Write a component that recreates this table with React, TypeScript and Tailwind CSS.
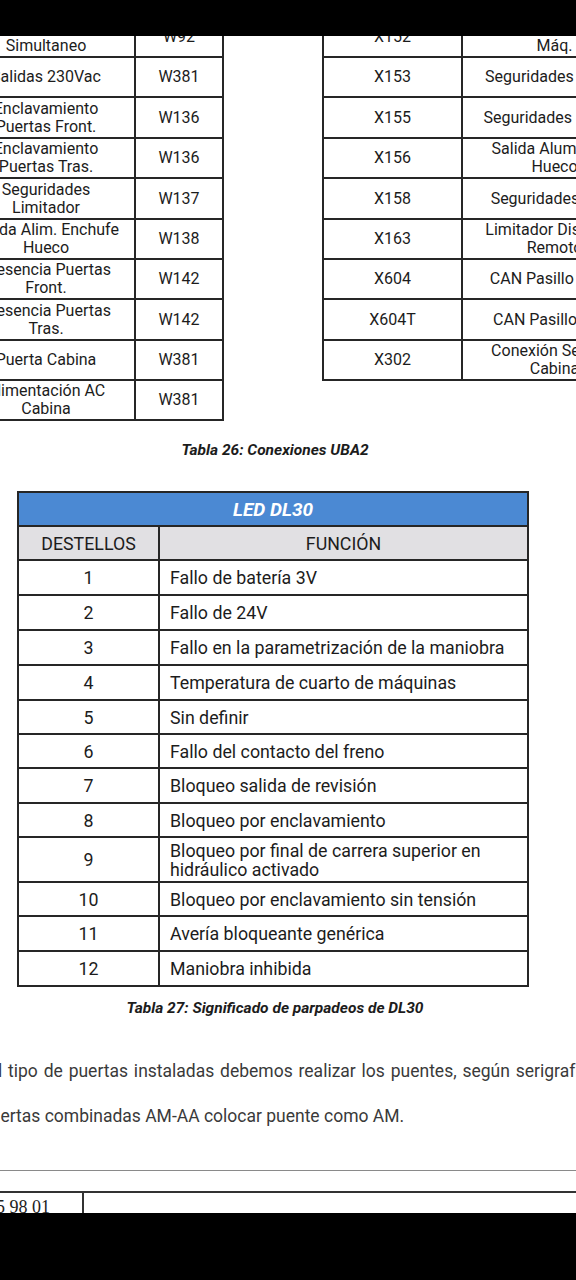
import React from 'react';

const font = "font-['Roboto','Liberation_Sans',sans-serif]";

const leftRows: { name: string[]; code: string; h: number }[] = [
  { name: ['Rescate', 'Simultaneo'], code: 'W92', h: 40 },
  { name: ['Salidas 230Vac'], code: 'W381', h: 40 },
  { name: ['Enclavamiento', 'Puertas Front.'], code: 'W136', h: 41 },
  { name: ['Enclavamiento', 'Puertas Tras.'], code: 'W136', h: 40 },
  { name: ['Seguridades', 'Limitador'], code: 'W137', h: 41 },
  { name: ['Salida Alim. Enchufe', 'Hueco'], code: 'W138', h: 40 },
  { name: ['Presencia Puertas', 'Front.'], code: 'W142', h: 40 },
  { name: ['Presencia Puertas', 'Tras.'], code: 'W142', h: 41 },
  { name: ['Puerta Cabina'], code: 'W381', h: 40 },
  { name: ['Alimentación AC', 'Cabina'], code: 'W381', h: 40 },
];

const rightRows: { code: string; name: string[]; h: number }[] = [
  { code: 'X152', name: ['Alimentación', 'Máq.'], h: 40 },
  { code: 'X153', name: ['Seguridades Hueco'], h: 40 },
  { code: 'X155', name: ['Seguridades Cabina'], h: 41 },
  { code: 'X156', name: ['Salida Alumbrado', 'Hueco'], h: 40 },
  { code: 'X158', name: ['Seguridades Foso'], h: 41 },
  { code: 'X163', name: ['Limitador Distancia', 'Remoto'], h: 40 },
  { code: 'X604', name: ['CAN Pasillo Front.'], h: 40 },
  { code: 'X604T', name: ['CAN Pasillo Tras.'], h: 41 },
  { code: 'X302', name: ['Conexión Señales', 'Cabina'], h: 40 },
];

const ledRows: { n: string; text: string[]; h: number }[] = [
  { n: '1', text: ['Fallo de batería 3V'], h: 35 },
  { n: '2', text: ['Fallo de 24V'], h: 35 },
  { n: '3', text: ['Fallo en la parametrización de la maniobra'], h: 35 },
  { n: '4', text: ['Temperatura de cuarto de máquinas'], h: 35 },
  { n: '5', text: ['Sin definir'], h: 34 },
  { n: '6', text: ['Fallo del contacto del freno'], h: 34 },
  { n: '7', text: ['Bloqueo salida de revisión'], h: 35 },
  { n: '8', text: ['Bloqueo por enclavamiento'], h: 34 },
  { n: '9', text: ['Bloqueo por final de carrera superior en', 'hidráulico activado'], h: 45 },
  { n: '10', text: ['Bloqueo por enclavamiento sin tensión'], h: 34 },
  { n: '11', text: ['Avería bloqueante genérica'], h: 35 },
  { n: '12', text: ['Maniobra inhibida'], h: 35 },
];

const Lines = ({ lines }: { lines: string[] }) => (
  <>
    {lines.map((l, i) => (
      <span key={i} className="block whitespace-nowrap">
        {l}
      </span>
    ))}
  </>
);

export default function App() {
  return (
    <div className={`w-[576px] h-[1280px] bg-black flex flex-col overflow-hidden ${font}`}>
      <div className="h-[36px] shrink-0 bg-black" />
      <div className="h-[1177px] shrink-0 bg-white overflow-hidden">
        <div className="-mt-[20px]">
          {/* connection tables */}
          <div className="flex items-start text-[16px] leading-[18px] text-[#1c1c1c]">
            <div className="ml-[-44px] w-[268px] shrink-0 border-x-2 border-t-2 border-[#262626]">
              {leftRows.map((r, i) => (
                <div key={i} style={{ height: r.h }} className="flex border-b-2 border-[#262626]">
                  <div className="w-[178px] border-r-2 border-[#262626] flex flex-col items-center justify-center text-center">
                    <Lines lines={r.name} />
                  </div>
                  <div className="flex-1 flex items-center justify-center">{r.code}</div>
                </div>
              ))}
            </div>
            <div className="ml-[98px] w-[324px] shrink-0 border-x-2 border-t-2 border-[#262626]">
              {rightRows.map((r, i) => (
                <div key={i} style={{ height: r.h }} className="flex border-b-2 border-[#262626]">
                  <div className="w-[139px] border-r-2 border-[#262626] flex items-center justify-center">{r.code}</div>
                  <div className="flex-1 flex flex-col items-center justify-center text-center pl-[2px]">
                    <Lines lines={r.name} />
                  </div>
                </div>
              ))}
            </div>
          </div>

          <p className="mt-[20px] w-[550px] text-center text-[15.5px] leading-[18px] font-bold italic text-[#1c1c1c]">
            Tabla 26: Conexiones UBA2
          </p>

          {/* LED DL30 table */}
          <div className="mt-[32px] ml-[17px] w-[512px] border-2 border-b-0 border-[#262626] text-[17.8px] leading-[19px] text-[#1c1c1c]">
            <div className="h-[34px] bg-[#4b89d3] border-b-2 border-[#262626] flex items-center justify-center text-white font-bold italic text-[19px]">
              LED DL30
            </div>
            <div className="h-[34px] bg-[#e1e0e3] border-b-2 border-[#262626] flex">
              <div className="w-[141px] border-r-2 border-[#262626] flex items-center justify-center">DESTELLOS</div>
              <div className="flex-1 flex items-center justify-center">FUNCIÓN</div>
            </div>
            {ledRows.map((r) => (
              <div key={r.n} style={{ height: r.h }} className="flex border-b-2 border-[#262626]">
                <div className="w-[141px] border-r-2 border-[#262626] flex items-center justify-center">{r.n}</div>
                <div className="flex-1 flex flex-col justify-center pl-[10px]">
                  <Lines lines={r.text} />
                </div>
              </div>
            ))}
          </div>

          <p className="mt-[12px] w-[550px] text-center text-[15.5px] leading-[18px] font-bold italic text-[#1c1c1c]">
            Tabla 27: Significado de parpadeos de DL30
          </p>

          {/* paragraph */}
          <div className="mt-[43px] text-[17.5px] leading-[22px] text-[#3a3a3a]">
            <p className="ml-[-66px] whitespace-nowrap [word-spacing:1.5px]">
              Según el tipo de puertas instaladas debemos realizar los puentes, según serigrafía de la placa.
            </p>
            <p className="mt-[23px] ml-[-43px] whitespace-nowrap">
              En puertas combinadas AM-AA colocar puente como AM.
            </p>
          </div>

          {/* footer */}
          <div className="mt-[43px] h-px bg-[#8a8a8a]" />
          <div className="mt-[20px] border-t-2 border-[#333] flex h-[30px]">
            <div className="w-[84px] border-r-2 border-[#333] flex justify-end pt-[4px] pr-[32px] overflow-hidden">
              <span className="font-['Liberation_Serif',serif] text-[18px] leading-[20px] text-[#222] whitespace-nowrap">
                045 98 01
              </span>
            </div>
            <div className="flex-1" />
          </div>
        </div>
      </div>
    </div>
  );
}
